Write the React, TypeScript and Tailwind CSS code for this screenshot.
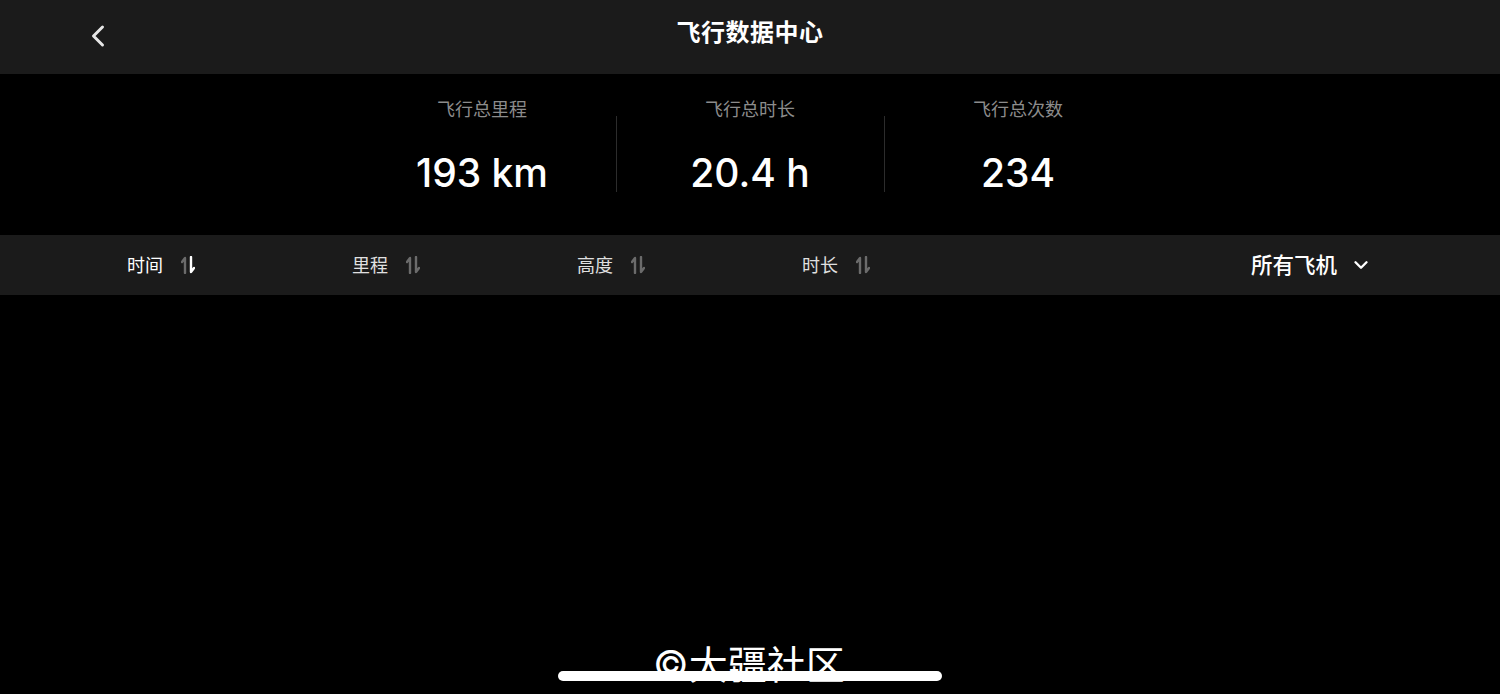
import { Fragment } from 'react';
import { ChevronLeft, ChevronDown } from 'lucide-react';

type Stat = { label: string; value: string };

const STATS: Stat[] = [
  { label: '飞行总里程', value: '193 km' },
  { label: '飞行总时长', value: '20.4 h' },
  { label: '飞行总次数', value: '234' },
];

type SortCol = { id: string; label: string; active?: boolean };

const COLS: SortCol[] = [
  { id: 'time', label: '时间', active: true },
  { id: 'dist', label: '里程' },
  { id: 'height', label: '高度' },
  { id: 'dur', label: '时长' },
];

const FONT = { fontFamily: 'Inter, "Noto Sans CJK SC", sans-serif' };

// icone de ordenacao: seta pra cima a esquerda, pra baixo a direita
function SortIcon({ active }: { active?: boolean }) {
  const down = active ? '#ffffff' : '#6b6b6b';
  return (
    <svg width="14" height="18" viewBox="0 0 14 18" fill="none">
      <path d="M4 17V2L1 6" stroke="#6b6b6b" strokeWidth="2.4" strokeLinecap="round" strokeLinejoin="round" />
      <path d="M10 1v15l3-4" stroke={down} strokeWidth="2.4" strokeLinecap="round" strokeLinejoin="round" />
    </svg>
  );
}

export default function App() {
  return (
    <div className="relative h-[694px] w-full overflow-hidden bg-black text-white" style={FONT}>
      <header className="relative flex h-[74px] items-center justify-center bg-[#1b1b1b]">
        <button className="absolute left-[80px] top-[18px] text-[#e6e6e6]">
          <ChevronLeft size={36} strokeWidth={2} />
        </button>
        <h1 className="-mt-[8px] text-[24px] font-bold tracking-[0.5px]">飞行数据中心</h1>
      </header>

      <section className="flex h-[161px] items-start justify-center">
        {STATS.map((s, i) => (
          <Fragment key={s.label}>
            {i > 0 && <div className="mt-[42px] h-[76px] w-px bg-[#2c2c2c]" />}
            <div className="flex w-[267px] flex-col items-center pt-[23px]">
              <span className="text-[18px] leading-[25px] text-[#8c8c8c]">{s.label}</span>
              <span className="mt-[31px] text-[39px] font-medium leading-none">{s.value}</span>
            </div>
          </Fragment>
        ))}
      </section>

      <nav className="flex h-[60px] items-center bg-[#1b1b1b] pl-[127px] pr-[128px]">
        {COLS.map((c) => (
          <div key={c.id} className="flex w-[225px] items-center gap-[18px]">
            <span className={`text-[18px] ${c.active ? 'text-white' : 'text-[#e0e0e0]'}`}>{c.label}</span>
            <SortIcon active={c.active} />
          </div>
        ))}
        <div className="ml-auto flex items-center gap-[13px]">
          <span className="text-[21.5px] font-medium">所有飞机</span>
          <ChevronDown size={22} strokeWidth={2.6} />
        </div>
      </nav>

      <div className="absolute left-[653px] top-[642px] text-[39px] leading-[46px] text-white">©大疆社区</div>
      <div className="absolute left-[558px] top-[671px] h-[10px] w-[384px] rounded-full bg-white" />
    </div>
  );
}
